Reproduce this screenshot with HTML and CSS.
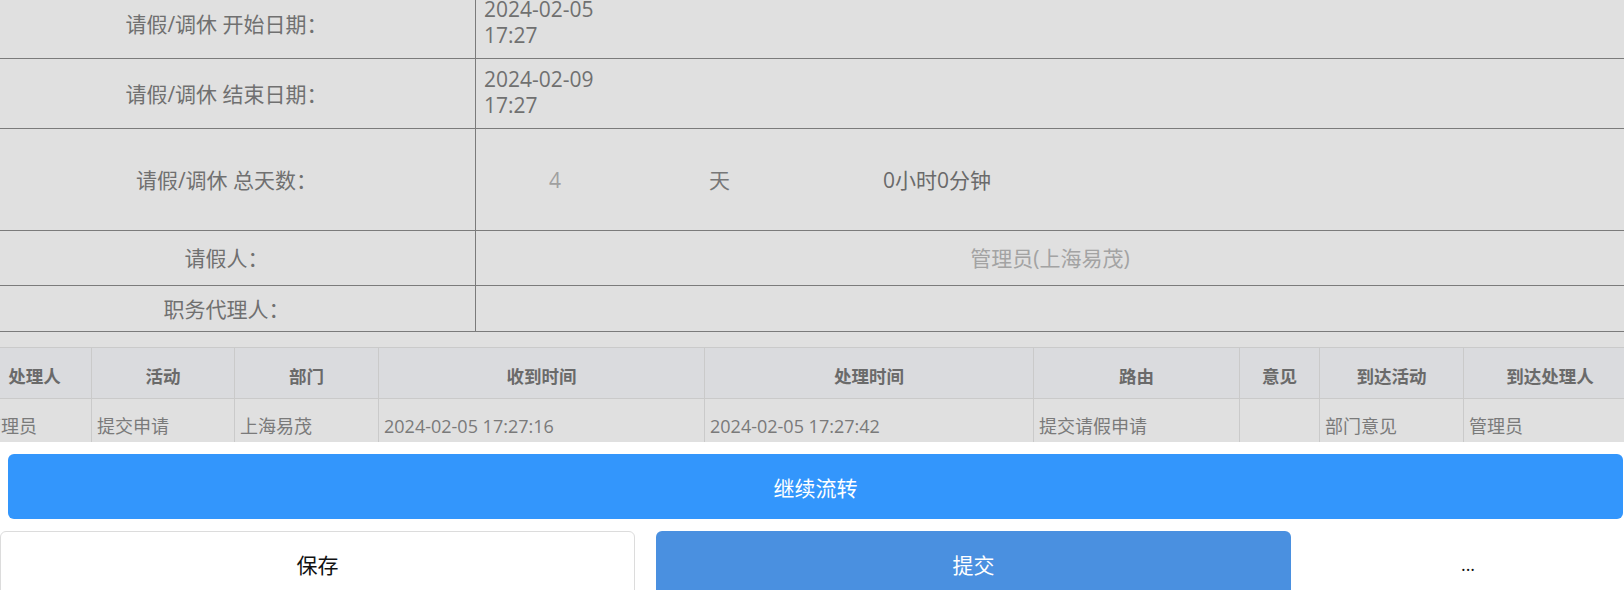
FILE: index.html
```html
<!DOCTYPE html>
<html lang="zh-CN">
<head>
<meta charset="utf-8">
<title>请假申请</title>
<link rel="stylesheet" href="styles.css">
</head>
<body>
<div class="page">
  <div class="sheet">
    <div class="form">
      <div class="row row-date">
        <div class="label">请假/调休 开始日期：</div>
        <div class="value date">2024-02-05<br>17:27</div>
      </div>
      <div class="row row-date">
        <div class="label">请假/调休 结束日期：</div>
        <div class="value date">2024-02-09<br>17:27</div>
      </div>
      <div class="row row-days">
        <div class="label">请假/调休 总天数：</div>
        <div class="value days">
          <span class="num">4</span><span class="unit">天</span><span class="hours">0小时0分钟</span>
        </div>
      </div>
      <div class="row row-person">
        <div class="label">请假人：</div>
        <div class="value person">管理员(上海易茂)</div>
      </div>
      <div class="row row-agent">
        <div class="label">职务代理人：</div>
        <div class="value"></div>
      </div>
    </div>
    <div class="log">
      <table class="log-table">
        <colgroup>
          <col class="c1"><col class="c2"><col class="c3"><col class="c4"><col class="c5"><col class="c6"><col class="c7"><col class="c8"><col class="c9">
        </colgroup>
        <thead>
          <tr>
            <th>处理人</th><th>活动</th><th>部门</th><th>收到时间</th><th>处理时间</th><th>路由</th><th>意见</th><th>到达活动</th><th>到达处理人</th>
          </tr>
        </thead>
        <tbody>
          <tr>
            <td>管理员</td><td>提交申请</td><td>上海易茂</td><td>2024-02-05 17:27:16</td><td>2024-02-05 17:27:42</td><td>提交请假申请</td><td></td><td>部门意见</td><td>管理员</td>
          </tr>
        </tbody>
      </table>
    </div>
  </div>
  <div class="actions">
    <button class="btn btn-flow" type="button">继续流转</button>
    <div class="btn-row">
      <button class="btn btn-save" type="button">保存</button>
      <button class="btn btn-submit" type="button">提交</button>
      <button class="btn btn-more" type="button">...</button>
    </div>
  </div>
</div>
</body>
</html>
```
FILE: styles.css
```css
html, body {
  margin: 0;
  padding: 0;
  background: #ffffff;
  overflow: hidden;
}

body {
  font-family: "Open Sans", "Noto Sans CJK SC", sans-serif;
  font-size: 21px;
  color: #666;
}

.page {
  margin-top: -11px;
  width: 1624px;
}

.sheet {
  background: #e0e0e0;
}

.form {
  display: flex;
  flex-direction: column;
}

.row {
  display: grid;
  grid-template-columns: 476px 1fr;
  border-bottom: 1px solid #7b7b7b;
}

.label {
  border-right: 1px solid #7b7b7b;
  display: flex;
  align-items: center;
  justify-content: center;
  padding-right: 22px;
  color: #707070;
  line-height: 26px;
}

.value {
  display: flex;
  align-items: center;
  line-height: 26px;
}

.row-date {
  height: 69px;
}

.date {
  display: block;
  padding: 7px 8px 0;
  color: #707070;
}

.row-days {
  height: 101px;
}

.num {
  width: 158px;
  text-align: center;
  color: #a0a0a0;
}

.unit {
  margin-left: 75px;
  color: #777;
}

.hours {
  margin-left: 153px;
  color: #6a6a6a;
}

.row-person {
  height: 54px;
}

.person {
  justify-content: center;
  color: #a3a3a3;
}

.row-agent {
  height: 45px;
}

.log {
  margin-top: 15px;
  height: 95px;
  overflow: hidden;
}

.log-table {
  table-layout: fixed;
  border-collapse: collapse;
  width: 1659px;
  margin-left: -23px;
  font-family: "Open Sans", "Noto Sans CJK SC", sans-serif;
}

.c1 { width: 114px; }
.c2 { width: 143px; }
.c3 { width: 144px; }
.c4 { width: 326px; }
.c5 { width: 329px; }
.c6 { width: 206px; }
.c7 { width: 80px; }
.c8 { width: 144px; }
.c9 { width: 173px; }

.log-table th {
  background: #dadbde;
  border: 1px solid #cacaca;
  height: 51px;
  padding: 4px 0 0;
  box-sizing: border-box;
  font-size: 17.5px;
  font-weight: bold;
  color: #6a6a6a;
  text-align: center;
  vertical-align: middle;
}

.log-table td {
  background: #e0e0e0;
  border: 1px solid #cacaca;
  padding: 15px 4px 20px 5px;
  font-size: 18px;
  line-height: 24px;
  color: #7a7a7a;
  text-align: left;
  white-space: nowrap;
  overflow: hidden;
}

.actions {
  padding-top: 12px;
}

.btn {
  font-family: "Open Sans", "Noto Sans CJK SC", sans-serif;
  font-size: 21px;
  border-radius: 6px;
  border: 0;
  cursor: pointer;
  display: flex;
  align-items: center;
  justify-content: center;
  padding: 0;
}

.btn-flow {
  width: 1615px;
  height: 65px;
  margin-left: 8px;
  background: #3396fc;
  color: #ffffff;
}

.btn-row {
  display: grid;
  grid-template-columns: 635px 635px 1fr;
  column-gap: 21px;
  margin-top: 12px;
}

.btn-save,
.btn-submit,
.btn-more {
  height: 66px;
}

.btn-save {
  background: #ffffff;
  border: 1px solid #dcdcdc;
  color: #111;
}

.btn-submit {
  background: #4a90e0;
  color: #ffffff;
}

.btn-more {
  background: transparent;
  color: #111;
  font-size: 18px;
}
```
